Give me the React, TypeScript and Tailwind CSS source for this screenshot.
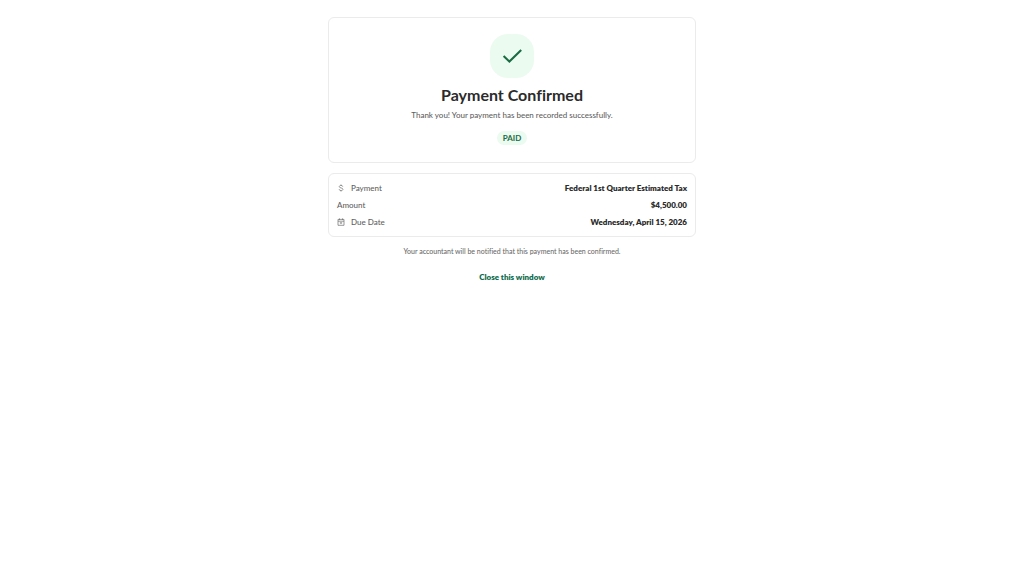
import type { ReactNode } from 'react'

function CheckIcon() {
  return (
    <svg viewBox="0 0 20 16" className="h-4 w-5" fill="none" stroke="#1b6b43" strokeWidth="2.1" aria-hidden="true">
      <path d="M1.6 8 L7.4 13.6 L19.2 2" />
    </svg>
  )
}

function DollarIcon() {
  return (
    <svg viewBox="0 0 8 8" className="h-2 w-2" fill="none" stroke="#6b6b6b" strokeWidth="0.7" aria-hidden="true">
      <path d="M4 .5V1.4M4 6.6V7.5M5.8 2.7C5.6 1.8 5 1.4 4 1.4C3 1.4 2.3 1.9 2.3 2.7C2.3 4.4 5.9 3.5 5.9 5.3C5.9 6.1 5.1 6.6 4 6.6C2.9 6.6 2.3 6.1 2.1 5.2" />
    </svg>
  )
}

function CalendarIcon() {
  return (
    <svg viewBox="0 0 8 8" className="h-2 w-2" fill="none" stroke="#6b6b6b" strokeWidth="0.7" aria-hidden="true">
      <path d="M1 1.4H7V7.3H1ZM1 3.2H7M2.5 .4V2M5.5 .4V2M2.8 4.8H5.2M4 4.8V6" />
    </svg>
  )
}

type DetailProps = {
  label: string
  value: string
  icon?: ReactNode
}

function Detail({ label, value, icon }: DetailProps) {
  return (
    <div className="flex items-center justify-between">
      <dt className="flex items-center gap-1.5 font-medium text-[#5f5f5f]">
        {icon}
        {label}
      </dt>
      <dd className="font-extrabold text-[#2b2b2b]">{value}</dd>
    </div>
  )
}

export default function App() {
  return (
    <main className="mx-auto w-full max-w-[368px] pt-[17px] pb-4 text-center font-['Lato',sans-serif] text-[8px] leading-3 [font-variant-ligatures:none]">
      <section className="flex flex-col items-center rounded-md border border-[#ebebeb] bg-white px-4 pt-4 pb-[17px]">
        <div className="flex size-11 items-center justify-center rounded-[18px] bg-[#ebfbf0]">
          <CheckIcon />
        </div>
        <h1 className="mt-[7px] text-base leading-5 font-bold text-[#2b2b2b]">Payment Confirmed</h1>
        <p className="mt-1 font-medium text-[#5f5f5f]">Thank you! Your payment has been recorded successfully.</p>
        <span className="mt-2.5 rounded-full bg-[#ebfbf0] px-1.5 py-px font-bold text-[#1b6b43]">PAID</span>
      </section>

      <dl className="mt-2.5 flex flex-col gap-[5px] rounded-md border border-[#ebebeb] bg-white p-2">
        <Detail label="Payment" value="Federal 1st Quarter Estimated Tax" icon={<DollarIcon />} />
        <Detail label="Amount" value="$4,500.00" />
        <Detail label="Due Date" value="Wednesday, April 15, 2026" icon={<CalendarIcon />} />
      </dl>

      <p className="mt-2 text-[7px] font-medium text-[#6b6b6b]">Your accountant will be notified that this payment has been confirmed.</p>
      <button type="button" className="mt-3.5 font-extrabold text-[#0f6b4c]">
        Close this window
      </button>
    </main>
  )
}
